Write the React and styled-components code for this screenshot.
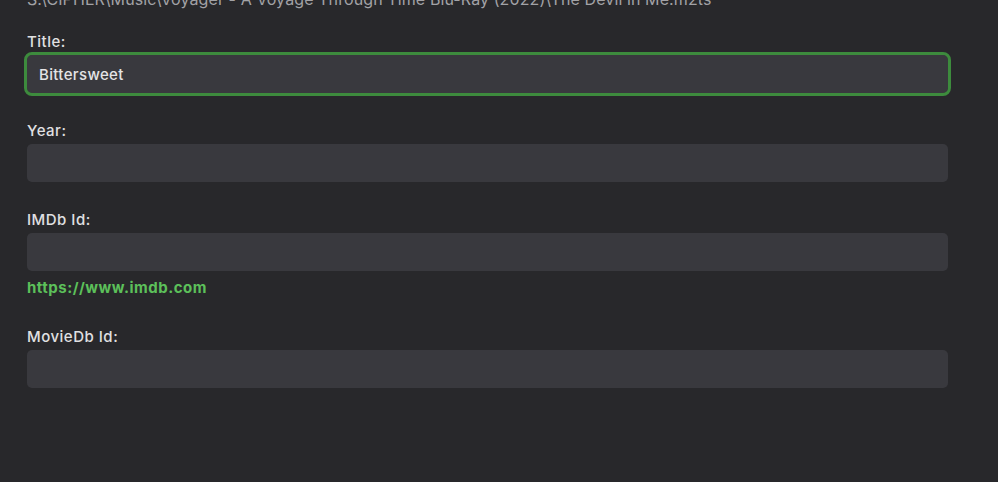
import React from 'react'
import styled, { createGlobalStyle } from 'styled-components'

const GlobalStyle = createGlobalStyle`
    html, body {
        margin: 0;
        padding: 0;
        background: #28282b;
        overflow: hidden;
    }
    body {
        font-family: Inter, "Noto Sans", sans-serif;
    }
`

const StyledPage = styled.div`
    width: 998px;
    height: 482px;
    padding: 0 27px;
    box-sizing: border-box;
    background: #28282b;
    color: #e2e2e4;
`

const StyledPath = styled.div`
    margin-top: -11px;
    font-size: 16px;
    line-height: 20px;
    letter-spacing: 0.1px;
    color: #a2a2a6;
    white-space: nowrap;
`

const StyledForm = styled.div`
    display: flex;
    flex-direction: column;
    width: 921px;
    margin-top: 23px;
`

const StyledField = styled.div`
    display: flex;
    flex-direction: column;
    margin-bottom: ${props => props.$last ? '0' : '28px'};
`

const StyledLabel = styled.label`
    font-size: 15px;
    line-height: 20px;
    font-weight: 500;
    letter-spacing: 0.5px;
    color: #e0e0e2;
    margin-bottom: 3px;
`

const StyledInput = styled.input`
    box-sizing: border-box;
    height: 38px;
    width: 100%;
    padding: 0 12px;
    border: none;
    border-radius: 5px;
    background: #39393e;
    color: #e4e4e6;
    font-family: Inter, "Noto Sans", sans-serif;
    font-size: 15px;
    font-weight: 500;
    letter-spacing: 0.35px;
    outline: ${props => props.$focused ? '3px solid #3d8b3d' : 'none'};
    outline-offset: 0;
`

const StyledLink = styled.a`
    margin-top: 7px;
    margin-bottom: 1px;
    font-size: 15px;
    line-height: 20px;
    font-weight: 700;
    letter-spacing: 0.5px;
    color: #5cc05a;
    text-decoration: none;
`

const fields = [
    { label: 'Title:', value: 'Bittersweet', focused: true },
    { label: 'Year:', value: '' },
    { label: 'IMDb Id:', value: '', link: 'https://www.imdb.com' },
    { label: 'MovieDb Id:', value: '' },
]

const App = () => {
    return (
        <StyledPage>
            <GlobalStyle />
            <StyledPath>S:\CIPHER\Music\Voyager - A Voyage Through Time Blu-Ray (2022)\The Devil in Me.m2ts</StyledPath>
            <StyledForm>
                {fields.map((f, i) => (
                    <StyledField key={f.label} $last={i === fields.length - 1}>
                        <StyledLabel>{f.label}</StyledLabel>
                        <StyledInput $focused={f.focused} defaultValue={f.value} readOnly />
                        {f.link && <StyledLink href={f.link}>{f.link}</StyledLink>}
                    </StyledField>
                ))}
            </StyledForm>
        </StyledPage>
    )
}

export default App
